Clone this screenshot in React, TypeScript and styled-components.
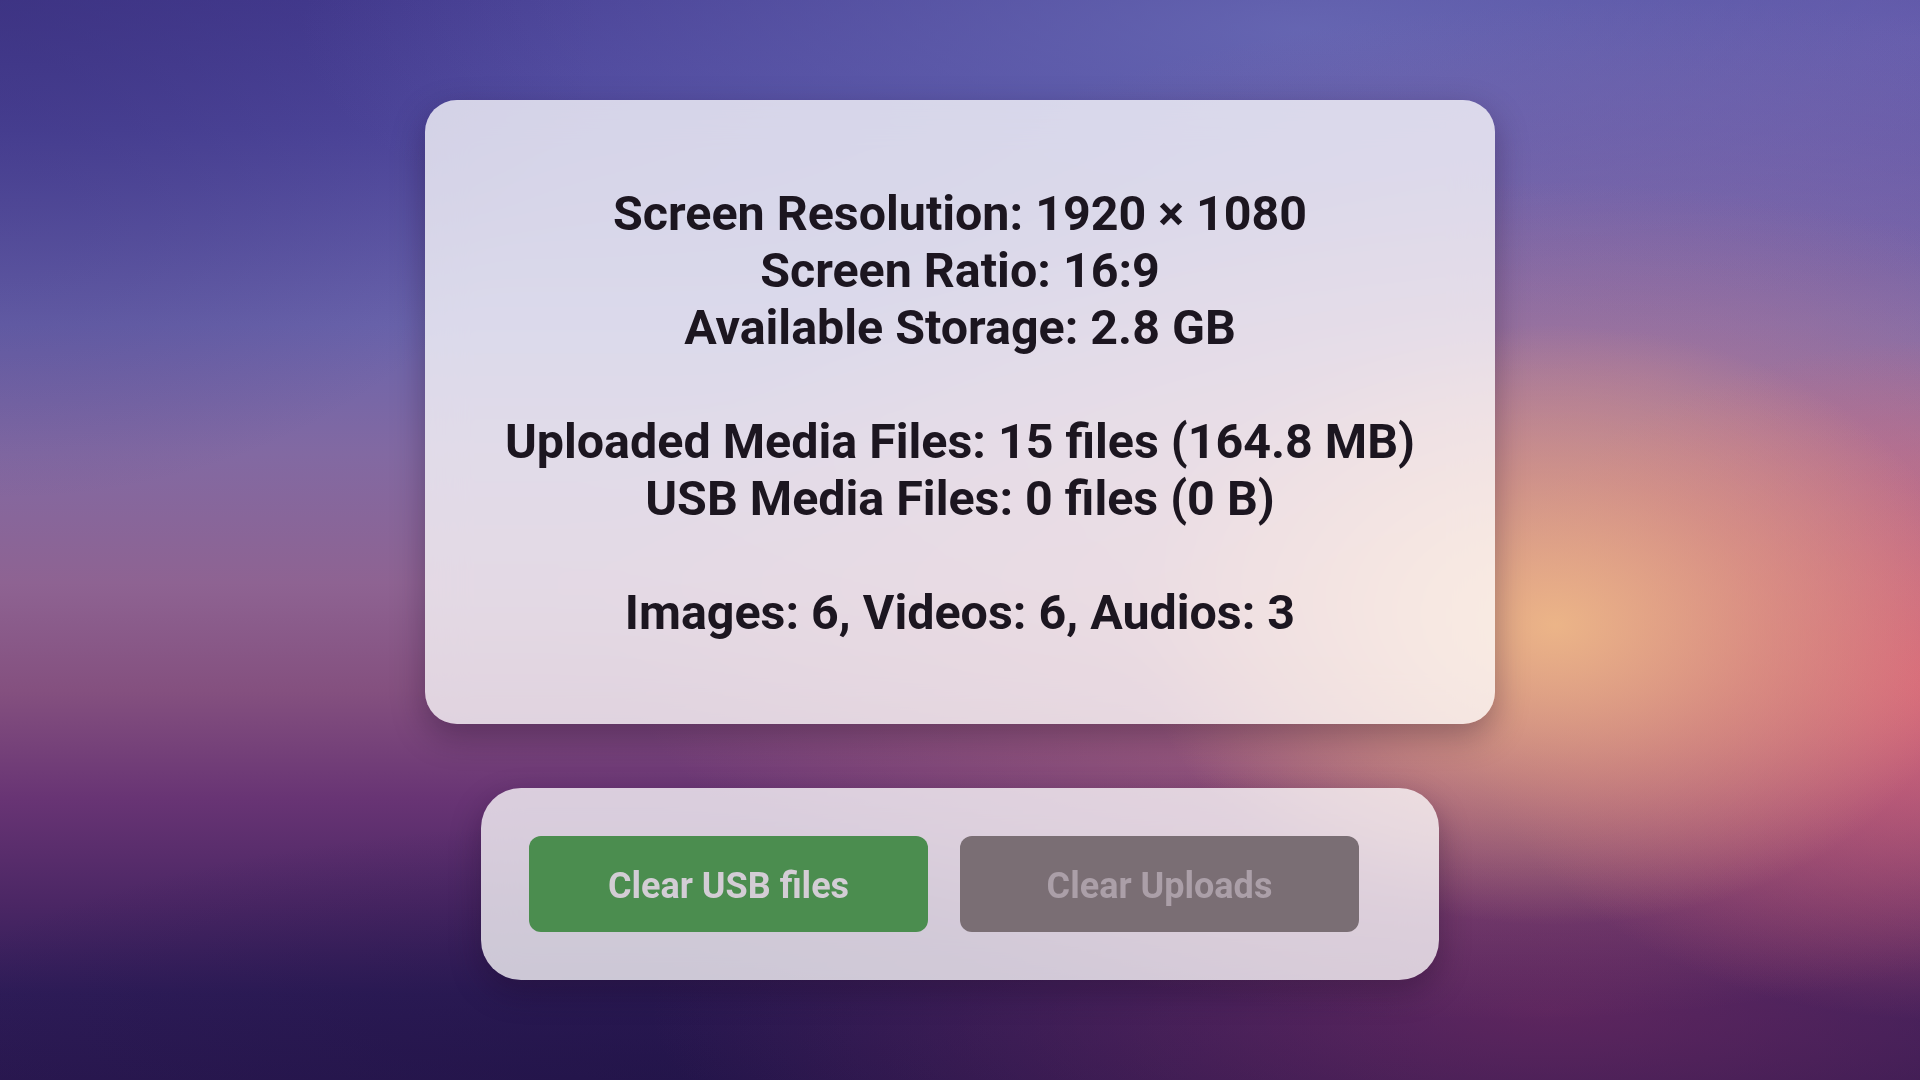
import React from "react";
import styled, { createGlobalStyle } from "styled-components";

const GlobalStyle = createGlobalStyle`
  html, body {
    margin: 0;
    padding: 0;
    height: 100%;
  }
  body {
    font-family: Roboto, "Liberation Sans", Arial, sans-serif;
    background: #2a1850;
  }
`;

const Page = styled.div`
  width: 100vw;
  height: 100vh;
  box-sizing: border-box;
  display: flex;
  flex-direction: column;
  align-items: center;
  justify-content: center;
  gap: 64px;
  overflow: hidden;
  background:
    radial-gradient(ellipse 420px 300px at 1555px 625px, rgba(238, 184, 136, 0.95) 0%, rgba(232, 168, 132, 0.55) 50%, rgba(220, 140, 130, 0) 100%),
    radial-gradient(ellipse 480px 340px at 1940px 680px, rgba(226, 104, 120, 0.85) 0%, rgba(210, 100, 120, 0) 100%),
    radial-gradient(ellipse 900px 420px at 1500px 600px, rgba(205, 125, 130, 0.7) 0%, rgba(190, 110, 135, 0) 100%),
    radial-gradient(ellipse 900px 380px at 1650px 380px, rgba(165, 120, 165, 0.55) 0%, rgba(165, 120, 165, 0) 100%),
    radial-gradient(ellipse 900px 260px at 1550px 1010px, rgba(125, 45, 100, 0.6) 0%, rgba(125, 45, 100, 0) 100%),
    radial-gradient(ellipse 800px 260px at 650px 1080px, rgba(30, 18, 70, 0.55) 0%, rgba(30, 18, 70, 0) 100%),
    radial-gradient(ellipse 1000px 300px at 1300px 30px, rgba(108, 110, 184, 0.8) 0%, rgba(108, 110, 184, 0) 100%),
    radial-gradient(ellipse 700px 320px at 1920px 40px, rgba(110, 96, 176, 0.7) 0%, rgba(110, 96, 176, 0) 100%),
    radial-gradient(ellipse 600px 500px at 0px 0px, rgba(55, 45, 120, 0.55) 0%, rgba(55, 45, 120, 0) 100%),
    linear-gradient(
      180deg,
      #453c92 0%,
      #4f489e 12%,
      #6a64ac 30%,
      #8269a2 42%,
      #8e6392 54%,
      #84507f 64%,
      #683474 74%,
      #4a2664 84%,
      #2e1c58 92%,
      #2a1850 100%
    );
`;

const InfoCard = styled.section`
  width: 1070px;
  height: 624px;
  box-sizing: border-box;
  padding-top: 85px;
  border-radius: 32px;
  background: rgba(255, 255, 255, 0.76);
  backdrop-filter: blur(20px);
  box-shadow: 0 12px 32px rgba(30, 10, 40, 0.35);
  display: flex;
  flex-direction: column;
  align-items: center;
`;

const InfoGroup = styled.div`
  display: flex;
  flex-direction: column;
  align-items: center;
  & + & {
    margin-top: 57px;
  }
`;

const InfoLine = styled.div`
  font-family: Roboto, "Liberation Sans", Arial, sans-serif;
  font-weight: 700;
  font-size: 48.4px;
  line-height: 57px;
  color: #1c1620;
  white-space: nowrap;
`;

const ActionPanel = styled.div`
  width: 958px;
  height: 192px;
  box-sizing: border-box;
  padding: 48px 80px 48px 48px;
  border-radius: 40px;
  background: rgba(255, 255, 255, 0.76);
  backdrop-filter: blur(20px);
  box-shadow: 0 12px 30px rgba(30, 10, 40, 0.35);
  display: flex;
  gap: 32px;
`;

const ActionButton = styled.button<{ $variant: "green" | "gray" }>`
  width: 400px;
  height: 96px;
  border: none;
  border-radius: 12px;
  font-family: Roboto, "Liberation Sans", Arial, sans-serif;
  font-weight: 700;
  font-size: 36px;
  display: flex;
  align-items: center;
  justify-content: center;
  padding: 4px 0 0;
  cursor: pointer;
  background: ${(p) => (p.$variant === "green" ? "#4b8d4f" : "#7a6e74")};
  color: ${(p) => (p.$variant === "green" ? "#d3cdd5" : "#ab9fa8")};
`;

export default function App() {
  return (
    <>
      <GlobalStyle />
      <Page>
        <InfoCard>
          <InfoGroup>
            <InfoLine>Screen Resolution: 1920 × 1080</InfoLine>
            <InfoLine>Screen Ratio: 16:9</InfoLine>
            <InfoLine>Available Storage: 2.8 GB</InfoLine>
          </InfoGroup>
          <InfoGroup>
            <InfoLine>Uploaded Media Files: 15 files (164.8 MB)</InfoLine>
            <InfoLine>USB Media Files: 0 files (0 B)</InfoLine>
          </InfoGroup>
          <InfoGroup>
            <InfoLine>Images: 6, Videos: 6, Audios: 3</InfoLine>
          </InfoGroup>
        </InfoCard>
        <ActionPanel>
          <ActionButton $variant="green">Clear USB files</ActionButton>
          <ActionButton $variant="gray" disabled>
            Clear Uploads
          </ActionButton>
        </ActionPanel>
      </Page>
    </>
  );
}
